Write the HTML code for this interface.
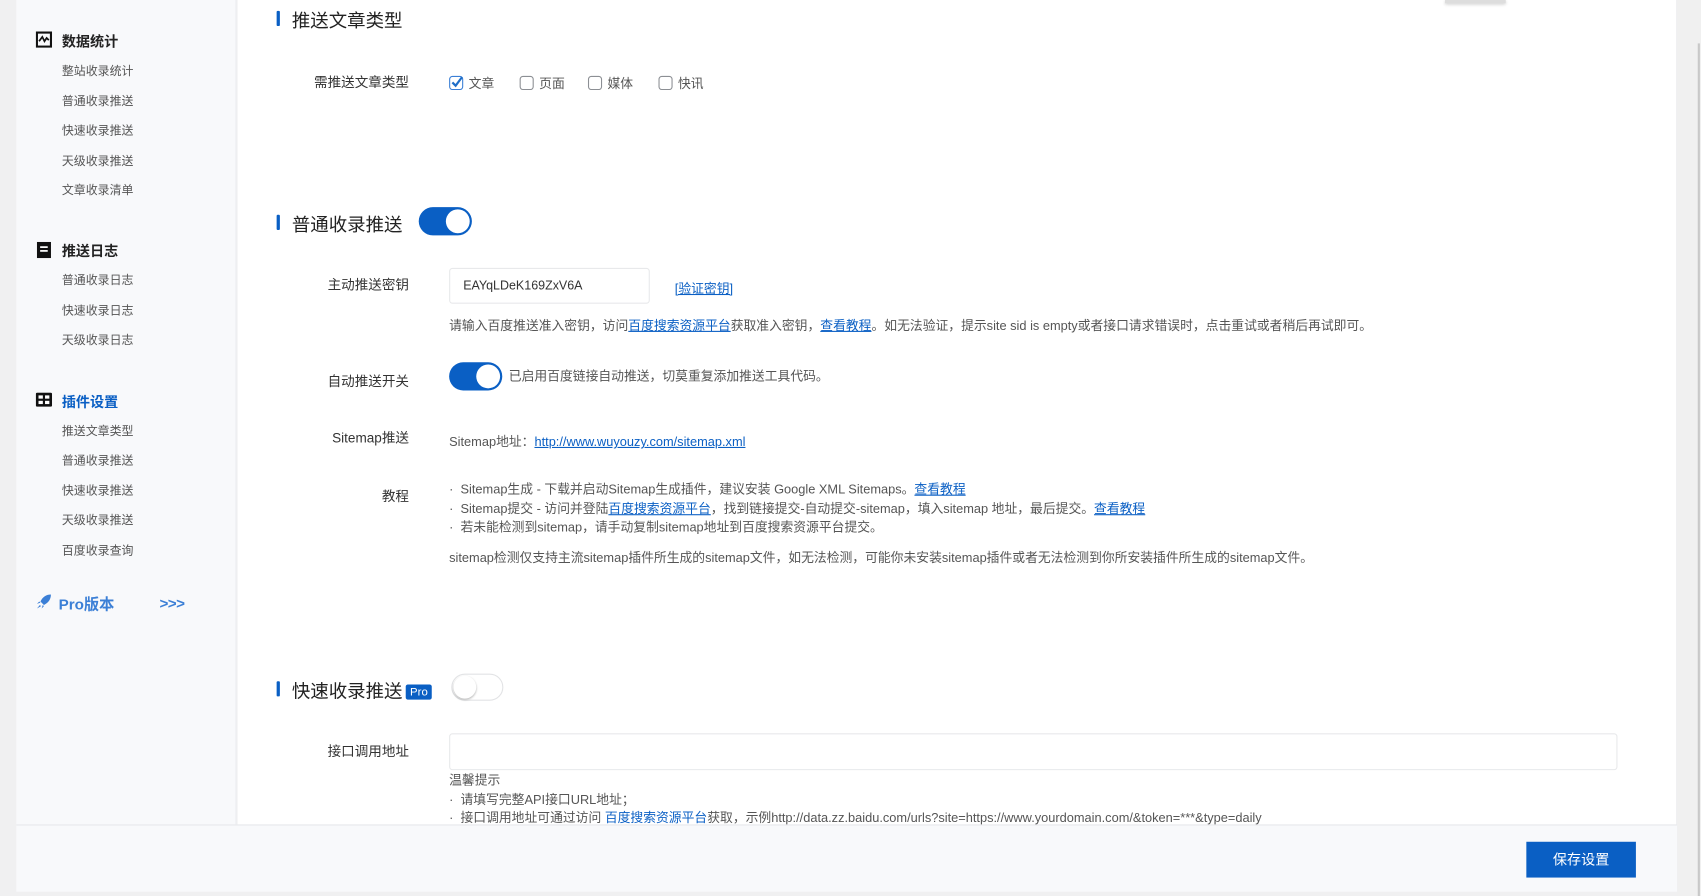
<!DOCTYPE html>
<html><head><meta charset="utf-8"><style>
*{margin:0;padding:0;box-sizing:border-box}
html,body{width:1701px;height:896px;overflow:hidden;background:#f0f0f1}
#w{position:absolute;left:0;top:0;width:1568px;height:826px;transform:scale(1.08482,1.08475);transform-origin:0 0;font-family:"Liberation Sans","Noto Sans CJK SC",sans-serif;color:#333}
.abs{position:absolute;white-space:nowrap}
#side{position:absolute;left:15px;top:0;width:203px;height:760px;background:#f8f9fb;border-right:1px solid #eceef1}
#main{position:absolute;left:219px;top:0;width:1326px;height:760px;background:#fff}
#foot{position:absolute;left:15px;top:760px;width:1531px;height:62px;background:#f8f9fb;border-top:1px solid #e6e8eb}
#sb{position:absolute;left:1546px;top:0;width:22px;height:826px;background:#f0f0f0}
.h{font-size:13px;font-weight:bold;color:#222}
.s{font-size:11px;color:#555}
.t{font-size:17px;color:#222}
.bar{position:absolute;width:3px;height:14px;background:#0a5fc4;border-radius:1px}
.lb{font-size:12.5px;color:#333;text-align:right;width:140px}
.tx{font-size:11.8px;color:#555}
a{color:#0a5fc4;text-decoration:underline}
.sw{position:absolute;width:49px;height:26px;border-radius:13px;background:#0a5fc4}
.sw:after{content:"";position:absolute;right:2px;top:2px;width:22px;height:22px;border-radius:50%;background:#fff}
.cb{display:inline-block;width:13px;height:13px;border:1px solid #8c8f94;border-radius:3px;vertical-align:-2px;margin-right:5px;background:#fff}
.ci{position:absolute;top:68px}
</style></head><body><div id="w">
<div id="side">
<svg class="abs" style="left:18px;top:29px" width="15" height="15" viewBox="0 0 15 15"><rect x="1" y="1" width="13" height="13" fill="none" stroke="#111" stroke-width="2"/><path d="M3 9 L6 5 L8 9 L10 6 L12 8" fill="none" stroke="#111" stroke-width="1.6"/></svg>
<div class="abs h" style="left:42px;top:28px">数据统计</div>
<div class="abs s" style="left:42px;top:57px">整站收录统计</div>
<div class="abs s" style="left:42px;top:85px">普通收录推送</div>
<div class="abs s" style="left:42px;top:112px">快速收录推送</div>
<div class="abs s" style="left:42px;top:140px">天级收录推送</div>
<div class="abs s" style="left:42px;top:167px">文章收录清单</div>
<svg class="abs" style="left:19px;top:223px" width="13" height="15" viewBox="0 0 13 15"><rect x="0" y="0" width="13" height="15" fill="#111"/><rect x="3" y="4" width="7" height="1.6" fill="#fff"/><rect x="3" y="7.5" width="7" height="1.6" fill="#fff"/></svg>
<div class="abs h" style="left:42px;top:221px">推送日志</div>
<div class="abs s" style="left:42px;top:250px">普通收录日志</div>
<div class="abs s" style="left:42px;top:278px">快速收录日志</div>
<div class="abs s" style="left:42px;top:305px">天级收录日志</div>
<svg class="abs" style="left:18px;top:362px" width="15" height="13" viewBox="0 0 15 13"><rect width="15" height="13" rx="1.5" fill="#111"/><rect x="2.5" y="2.5" width="4" height="3" fill="#fff"/><rect x="8.5" y="2.5" width="4" height="3" fill="#fff"/><rect x="2.5" y="7.5" width="4" height="3" fill="#fff"/><rect x="8.5" y="7.5" width="4" height="3" fill="#fff"/></svg>
<div class="abs h" style="left:42px;top:360px;color:#0a5fc4">插件设置</div>
<div class="abs s" style="left:42px;top:389px">推送文章类型</div>
<div class="abs s" style="left:42px;top:416px">普通收录推送</div>
<div class="abs s" style="left:42px;top:444px">快速收录推送</div>
<div class="abs s" style="left:42px;top:471px">天级收录推送</div>
<div class="abs s" style="left:42px;top:499px">百度收录查询</div>
<svg class="abs" style="left:18px;top:547px" width="15" height="15" viewBox="0 0 14 14"><path d="M13 1 C9 1 6 3 4 7 L7 10 C11 8 13 5 13 1Z M4 8 L1 9 L3 7Z M6 10 L5 13 L7 11Z M3.5 10 L1 13 L4.5 11Z" fill="#3b7fd6"/></svg>
<div class="abs" style="left:39px;top:547px;font-size:14px;font-weight:bold;color:#3b7fd6">Pro版本</div>
<div class="abs" style="left:132px;top:548px;font-size:14px;font-weight:bold;color:#3b7fd6;letter-spacing:-0.5px">&gt;&gt;&gt;</div>
</div>
<div id="main">
<div class="bar" style="left:36px;top:10px"></div>
<div class="abs t" style="left:50px;top:5px">推送文章类型</div>
<div class="abs lb" style="left:18px;top:65px">需推送文章类型</div>
<div class="abs tx ci" style="left:195px"><span class="cb" style="border-color:#3b7fd6;position:relative"><svg style="position:absolute;left:0;top:-1px" width="12" height="12" viewBox="0 0 12 12"><path d="M2 6 L5 9 L11 1" fill="none" stroke="#1e6ec8" stroke-width="2"/></svg></span>文章</div>
<div class="abs tx ci" style="left:260px"><span class="cb"></span>页面</div>
<div class="abs tx ci" style="left:323px"><span class="cb"></span>媒体</div>
<div class="abs tx ci" style="left:388px"><span class="cb"></span>快讯</div>
<div class="bar" style="left:36px;top:198px"></div>
<div class="abs t" style="left:50px;top:193px">普通收录推送</div>
<div class="sw" style="left:167px;top:191px"></div>
<div class="abs lb" style="left:18px;top:252px">主动推送密钥</div>
<div class="abs" style="left:195px;top:247px;width:185px;height:33px;border:1px solid #e8e9eb;border-radius:3px;font-size:11.5px;color:#333;padding:10px 0 0 12px">EAYqLDeK169ZxV6A</div>
<div class="abs tx" style="left:403px;top:257px"><a>[验证密钥]</a></div>
<div class="abs tx" style="left:195px;top:291px">请输入百度推送准入密钥，访问<a>百度搜索资源平台</a>获取准入密钥，<a>查看教程</a>。如无法验证，提示site sid is empty或者接口请求错误时，点击重试或者稍后再试即可。</div>
<div class="abs lb" style="left:18px;top:341px">自动推送开关</div>
<div class="sw" style="left:195px;top:334px"></div>
<div class="abs tx" style="left:250px;top:338px">已启用百度链接自动推送，切莫重复添加推送工具代码。</div>
<div class="abs lb" style="left:18px;top:393px">Sitemap推送</div>
<div class="abs tx" style="left:195px;top:398px">Sitemap地址：<a>http://www.wuyouzy.com/sitemap.xml</a></div>
<div class="abs lb" style="left:18px;top:447px">教程</div>
<div class="abs tx" style="left:195px;top:443px;line-height:17.5px">·&nbsp;&nbsp;Sitemap生成 - 下载并启动Sitemap生成插件，建议安装 Google XML Sitemaps。<a>查看教程</a><br>·&nbsp;&nbsp;Sitemap提交 - 访问并登陆<a>百度搜索资源平台</a>，找到链接提交-自动提交-sitemap，填入sitemap 地址，最后提交。<a>查看教程</a><br>·&nbsp;&nbsp;若未能检测到sitemap，请手动复制sitemap地址到百度搜索资源平台提交。</div>
<div class="abs tx" style="left:195px;top:505px">sitemap检测仅支持主流sitemap插件所生成的sitemap文件，如无法检测，可能你未安装sitemap插件或者无法检测到你所安装插件所生成的sitemap文件。</div>
<div class="bar" style="left:36px;top:628px"></div>
<div class="abs t" style="left:50px;top:623px">快速收录推送</div>
<div class="abs" style="left:155px;top:631px;background:#0a5fc4;color:#fff;font-size:10.5px;padding:1px 4px;border-radius:2px">Pro</div>
<div class="abs" style="left:197px;top:621px;width:48px;height:25px;border-radius:13px;border:1px solid #e2e3e5;background:#fff"><div style="position:absolute;left:1px;top:1px;width:21px;height:21px;border-radius:50%;background:#fff;box-shadow:0 1px 2px rgba(0,0,0,.3)"></div></div>
<div class="abs lb" style="left:18px;top:682px">接口调用地址</div>
<div class="abs" style="left:195px;top:676px;width:1077px;height:34px;border:1px solid #e8e9eb;border-radius:3px"></div>
<div class="abs tx" style="left:195px;top:711px;line-height:17.5px">温馨提示<br>·&nbsp;&nbsp;请填写完整API接口URL地址；<br>·&nbsp;&nbsp;接口调用地址可通过访问 <a style="text-decoration:none">百度搜索资源平台</a>获取，示例http://data.zz.baidu.com/urls?site=https://www.yourdomain.com/&amp;token=***&amp;type=daily</div>
</div>
<div id="foot"><div class="abs" style="left:1392px;top:15px;width:101px;height:33px;background:#0a5fc4;color:#fff;font-size:13px;text-align:center;line-height:33px">保存设置</div></div>
<div id="sb"><div style="position:absolute;left:19px;top:40px;width:2px;height:786px;background:#c8c8c8"></div></div>
<div class="abs" style="left:1332px;top:0;width:56px;height:3px;background:#ddd;box-shadow:0 1px 3px rgba(0,0,0,.2)"></div>
</div></body></html>
